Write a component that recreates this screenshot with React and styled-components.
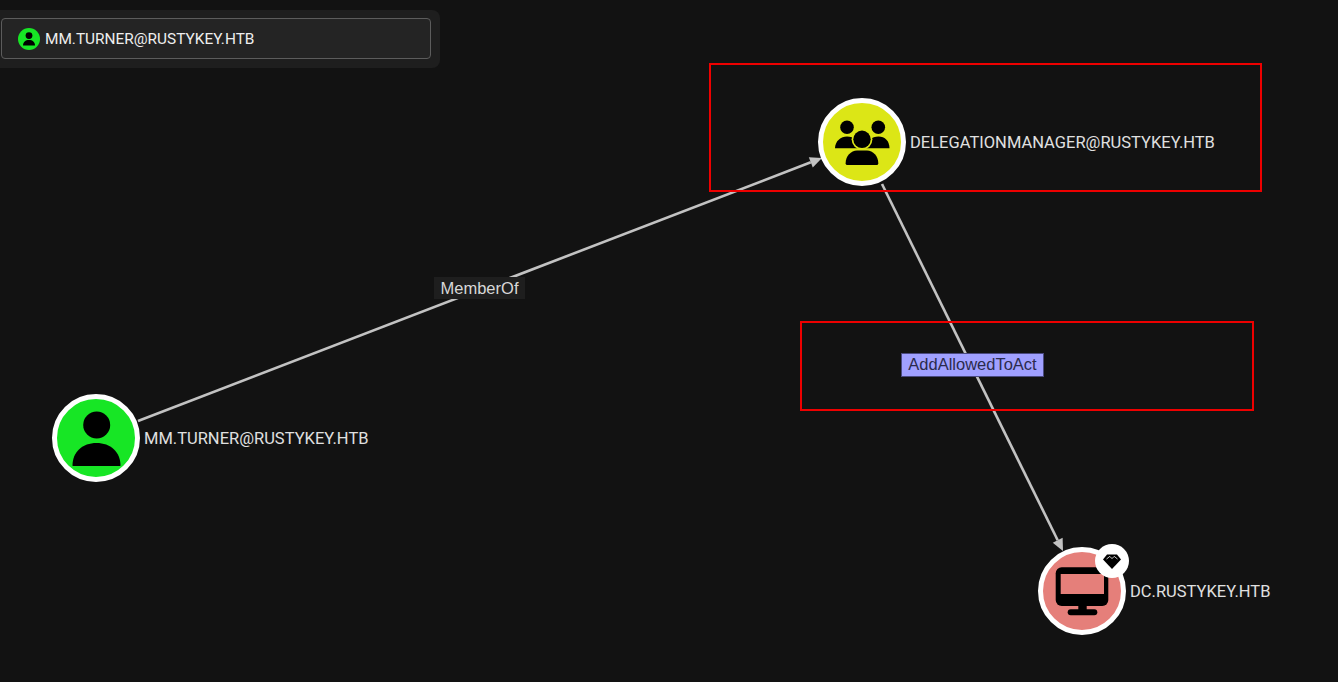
import React from "react";
import styled, { createGlobalStyle } from "styled-components";

const Global = createGlobalStyle`
  html, body { margin: 0; padding: 0; background: #121212; overflow: hidden; }
  #root { width: 1338px; height: 682px; }
`;

const Canvas = styled.main`
  position: relative;
  width: 1338px;
  height: 682px;
  background: #121212;
  overflow: hidden;
  font-family: Roboto, "Liberation Sans", sans-serif;
`;

const EdgeLayer = styled.svg`
  position: absolute;
  inset: 0;
`;

const SearchPanel = styled.div`
  position: absolute;
  left: -8px;
  top: 10px;
  width: 448px;
  height: 58px;
  box-sizing: border-box;
  padding: 8px 9px 9px 9px;
  background: #1e1e1e;
  border-radius: 8px;
  display: flex;
`;

const SearchField = styled.div`
  flex: 1;
  display: flex;
  align-items: center;
  gap: 5px;
  padding-left: 16px;
  background: #242424;
  border: 1px solid #5c5c5c;
  border-radius: 4px;
  color: #eeeeee;
  font-size: 15.4px;
`;

const ChipIcon = styled.span`
  width: 22px;
  height: 22px;
  border-radius: 50%;
  background: #17e625;
  display: flex;
  align-items: center;
  justify-content: center;
`;

const GraphNode = styled.div`
  position: absolute;
  left: ${(p) => p.$x}px;
  top: ${(p) => p.$y}px;
  display: flex;
  align-items: center;
  gap: 4px;
`;

const NodeDisc = styled.div`
  position: relative;
  width: 88px;
  height: 88px;
  box-sizing: border-box;
  border: 5px solid #ffffff;
  border-radius: 50%;
  background: ${(p) => p.$color};
`;

const NodeGlyph = styled.svg`
  position: absolute;
  left: -5px;
  top: -5px;
  width: 88px;
  height: 88px;
`;

const NodeLabel = styled.span`
  padding-top: 2px;
  color: #e0e0e0;
  font-size: 16.5px;
  line-height: 20px;
  white-space: nowrap;
`;

const Badge = styled.div`
  position: absolute;
  right: -8px;
  top: -8px;
  width: 34px;
  height: 34px;
  border-radius: 50%;
  background: #ffffff;
  display: flex;
  align-items: center;
  justify-content: center;
`;

const EdgeLabel = styled.span`
  position: absolute;
  left: ${(p) => p.$x}px;
  top: ${(p) => p.$y}px;
  width: ${(p) => p.$w}px;
  height: ${(p) => p.$h}px;
  box-sizing: border-box;
  display: flex;
  align-items: center;
  justify-content: center;
  padding-bottom: ${(p) => (p.$active ? "2px" : "0")};
  font-family: "Liberation Sans", Arial, sans-serif;
  font-size: 16.5px;
  white-space: nowrap;
  background: ${(p) => (p.$active ? "#a0a0ff" : "#1e1e1e")};
  color: ${(p) => (p.$active ? "#2b2b4d" : "#d8d8d8")};
  border: 1px solid ${(p) => (p.$active ? "#4a4a80" : "#1e1e1e")};
`;

const Annotation = styled.div`
  position: absolute;
  left: ${(p) => p.$x}px;
  top: ${(p) => p.$y}px;
  width: ${(p) => p.$w}px;
  height: ${(p) => p.$h}px;
  box-sizing: border-box;
  border: 2px solid #ee0000;
`;

const UserGlyph = () => (
  <>
    <circle cx="44.7" cy="31" r="13.5" fill="#000" />
    <path d="M20.5 71.5 C20.5 58 30.5 49 44.5 49 C58.5 49 68.5 58 68.5 71.5 Q68.5 72 67.5 72 L21.5 72 Q20.5 72 20.5 71.5Z" fill="#000" />
  </>
);

const GroupGlyph = () => (
  <>
    <circle cx="29" cy="29.3" r="6.8" fill="#000" />
    <circle cx="60.3" cy="29.3" r="6.8" fill="#000" />
    <path d="M17 50.3 C17 43 23 38.5 29 38.5 C36 38.5 41 43 41 50.3Z" fill="#000" />
    <path d="M48 50.3 C48 43 54 38.5 60.5 38.5 C67 38.5 71.5 43 71.5 50.3Z" fill="#000" />
    <circle cx="44" cy="41.3" r="10.4" fill="#dce616" />
    <circle cx="44" cy="41.3" r="8.7" fill="#000" />
    <path d="M27.6 65.5 C27.6 58 33 52.5 39 52.5 L49 52.5 C55 52.5 60.3 58 60.3 65.5 Q60.3 67 58.5 67 L29.5 67 Q27.6 67 27.6 65.5Z" fill="#000" />
  </>
);

const ComputerGlyph = () => (
  <>
    <rect x="17.7" y="20.3" width="52.6" height="38.7" rx="6" fill="#000" />
    <rect x="22.7" y="27" width="43.3" height="20" fill="#e57f7a" />
    <rect x="40.3" y="58" width="8.4" height="6" fill="#000" />
    <rect x="29.7" y="62.3" width="29.6" height="6" rx="3" fill="#000" />
  </>
);

const Edge = ({ x1, y1, x2, y2 }) => {
  const len = Math.hypot(x2 - x1, y2 - y1);
  const ux = (x2 - x1) / len;
  const uy = (y2 - y1) / len;
  const bx = x2 - ux * 12;
  const by = y2 - uy * 12;
  const head = `${x2},${y2} ${bx - uy * 5.5},${by + ux * 5.5} ${bx + uy * 5.5},${by - ux * 5.5}`;
  return (
    <>
      <line x1={x1} y1={y1} x2={bx} y2={by} stroke="#c2c2c2" strokeWidth="2.6" />
      <polygon points={head} fill="#c2c2c2" />
    </>
  );
};

export default function App() {
  return (
    <Canvas>
      <Global />
      <EdgeLayer width="1338" height="682">
        <Edge x1={138} y1={421} x2={822} y2={158} />
        <Edge x1={882} y1={184} x2={1063} y2={551} />
      </EdgeLayer>

      <SearchPanel>
        <SearchField>
          <ChipIcon>
            <svg width="16" height="16" viewBox="0 0 16 16">
              <circle cx="8" cy="4.6" r="3.4" fill="#000" />
              <path d="M2 14.5 C2 11 4.5 9 8 9 C11.5 9 14 11 14 14.5Z" fill="#000" />
            </svg>
          </ChipIcon>
          MM.TURNER@RUSTYKEY.HTB
        </SearchField>
      </SearchPanel>

      <GraphNode $x={52} $y={393.5}>
        <NodeDisc $color="#17e625">
          <NodeGlyph viewBox="0 0 88 88"><UserGlyph /></NodeGlyph>
        </NodeDisc>
        <NodeLabel>MM.TURNER@RUSTYKEY.HTB</NodeLabel>
      </GraphNode>

      <GraphNode $x={818} $y={98}>
        <NodeDisc $color="#dce616">
          <NodeGlyph viewBox="0 0 88 88"><GroupGlyph /></NodeGlyph>
        </NodeDisc>
        <NodeLabel>DELEGATIONMANAGER@RUSTYKEY.HTB</NodeLabel>
      </GraphNode>

      <GraphNode $x={1038} $y={547}>
        <NodeDisc $color="#e57f7a">
          <NodeGlyph viewBox="0 0 88 88"><ComputerGlyph /></NodeGlyph>
          <Badge>
            <svg width="18" height="15" viewBox="0 0 18 15">
              <path d="M4 0.5 L14 0.5 L18 5.5 L9 15 L0 5.5Z" fill="#000" />
              <path d="M3.5 5 L6.8 2.4 L9 4.6 L11.2 2.4 L14.5 5" fill="none" stroke="#fff" strokeWidth="0.8" />
            </svg>
          </Badge>
        </NodeDisc>
        <NodeLabel>DC.RUSTYKEY.HTB</NodeLabel>
      </GraphNode>

      <EdgeLabel $x={434} $y={277} $w={91} $h={22}>MemberOf</EdgeLabel>
      <EdgeLabel $x={901} $y={353} $w={143} $h={24} $active>AddAllowedToAct</EdgeLabel>

      <Annotation $x={709} $y={63} $w={553} $h={129} />
      <Annotation $x={800} $y={321} $w={454} $h={90} />
    </Canvas>
  );
}
